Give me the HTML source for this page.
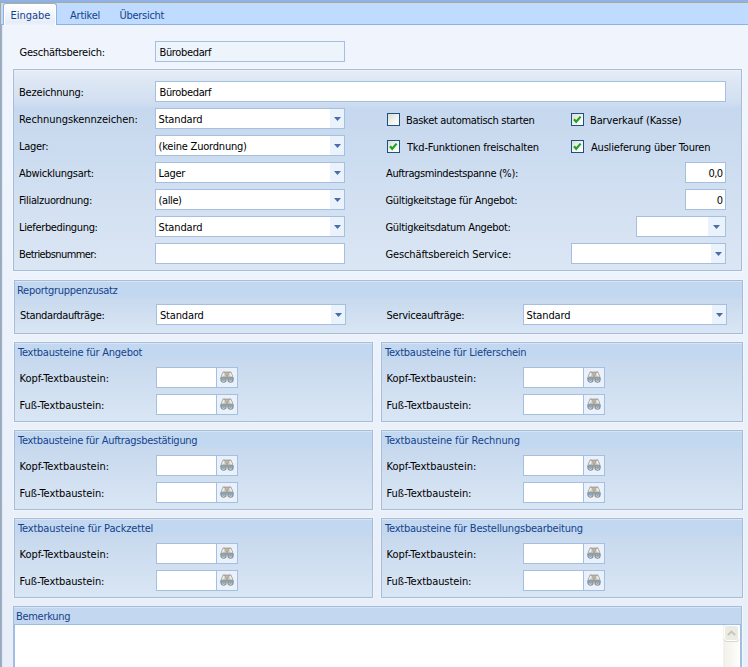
<!DOCTYPE html>
<html lang="de">
<head>
<meta charset="utf-8">
<title>Geschäftsbereich</title>
<style>
html,body{margin:0;padding:0}
body{width:748px;height:667px;overflow:hidden;position:relative;background:#eef4fc;font-family:"DejaVu Sans Condensed","Liberation Sans",sans-serif;font-size:11px;color:#000;line-height:13px}
div,span{box-sizing:border-box}
#page{position:absolute;left:0;top:0;width:748px;height:667px;overflow:hidden;background:linear-gradient(#f0f5fd 0,#f0f5fd 60px,#e8eff9 600px)}
#topa{position:absolute;left:0;top:0;width:748px;height:2px;background:#8db2e3}
#topb{position:absolute;left:0;top:2px;width:748px;height:1px;background:#aca899}
#lefta{position:absolute;left:0;top:2px;width:1px;height:665px;background:#aca899}
#leftb{position:absolute;left:1px;top:25px;width:2px;height:642px;background:linear-gradient(90deg,#8fb2e6 50%,#dde8f8 50%)}
#strip{position:absolute;left:1px;top:3px;width:747px;height:21px;background:#bfdbff}
#stripb{position:absolute;left:1px;top:24px;width:747px;height:1px;background:#8db2e3}
.tab{position:absolute;color:#15428b;white-space:nowrap;height:13px}
#tab1{position:absolute;left:3px;top:3px;width:54px;height:22px;border:1px solid #8db2e3;border-bottom:none;border-radius:3px 3px 0 0;background:linear-gradient(#fff 0,#f5f8fd 35%,#e7edf8 88%,#edf3fb 100%);box-shadow:inset 1px 1px 0 #fff,inset -1px 0 0 #fff}
.l,.lb{position:absolute;white-space:nowrap;height:13px}
.lb{color:#15428b}
.tf,.cb{position:absolute;height:21px;border:1px solid #a5bfe1;background:#fff;white-space:nowrap;overflow:hidden}
.tf .t,.cb .t{position:absolute;left:4px;top:4px;height:13px}
.cb .bt{position:absolute;right:0;top:0;width:14px;height:19px;background:#eaf2fc}
.cb .bt svg{position:absolute;left:4px;top:8px}
.cb .dt{width:17px}
.cb .dt svg{left:5px}
.ro{background:#eef4fc}
.bb{position:absolute;width:22px;height:21px;border:1px solid #a5bfe1;background:#e9f1fc}
.bb svg{position:absolute;left:3px;top:3px}
.ck{position:absolute;width:13px;height:13px;border:1px solid #1c5180;background:linear-gradient(135deg,#dcdcd5,#f3f3ef 55%,#fff)}
.ck svg{position:absolute;left:0;top:0}
.g{position:absolute;border:1px solid #a7bcd8;background:linear-gradient(#c2d8f0 0,#c2d8f0 16px,#c8d9ee 17px,#d9e6f4 100%);box-shadow:inset 0 1px 0 rgba(255,255,255,.35),0 0 0 1px rgba(255,255,255,.3)}
#g1{position:absolute;left:13px;top:69px;width:729px;height:202px;border:1px solid #a7bcd8;background:linear-gradient(#e6edf7 0,#dde7f4 11px,#d2dff1 32px,#c7d8ef 38px,#c6d8ee 40px,#dbe6f4 200px);box-shadow:inset 0 1px 0 rgba(255,255,255,.35),0 0 0 1px rgba(255,255,255,.3)}
#bem{position:absolute;left:13px;top:606px;width:729px;height:70px;border:1px solid #a6bedb;background:#c3d8f0;box-shadow:inset 0 1px 0 #d5e4f5,1px 0 0 #f4f8fd}
#memo{position:absolute;left:0;top:17px;width:727px;height:60px;border:1px solid #9ebde5;background:#fff}
#sb{position:absolute;right:0;top:0;width:17px;height:60px;background:linear-gradient(90deg,#f1f0e9,#fefefb)}
#sbu{position:absolute;left:1px;top:0;width:15px;height:16px;border:1px solid #fff;border-radius:3px;background:#ecebe3;box-shadow:0 1px 0 #d9d8ca}
#sbu svg{position:absolute;left:2px;top:4px}
</style>
</head>
<body>
<div id="page">
<div id="topa"></div><div id="topb"></div>
<div id="strip"></div><div id="stripb"></div>
<div id="lefta"></div><div id="leftb"></div>
<div id="tab1"></div>

<div id="t1" class="tab" style="left:10.5px;top:9px;letter-spacing:-0.045px">Eingabe</div>
<div id="t2" class="tab" style="left:70px;top:9px;letter-spacing:-0.226px">Artikel</div>
<div id="t3" class="tab" style="left:119.5px;top:9px;letter-spacing:-0.278px">Übersicht</div>
<div id="t4" class="l" style="left:19.5px;top:46px;letter-spacing:-0.224px">Geschäftsbereich:</div>
<div class="tf ro" style="left:155px;top:41px;width:190px"><span id="t5" class="t" style="letter-spacing:-0.35px;margin-left:-0.5px">Bürobedarf</span></div>
<div id="g1"></div>
<div id="t6" class="l" style="left:19px;top:86px;letter-spacing:-0.192px">Bezeichnung:</div>
<div class="tf" style="left:155px;top:81px;width:571px"><span id="t7" class="t" style="letter-spacing:-0.349px;margin-left:-0.5px">Bürobedarf</span></div>
<div id="t8" class="l" style="left:19px;top:113px;letter-spacing:-0.047px">Rechnungskennzeichen:</div>
<div class="cb" style="left:155px;top:108px;width:190px"><span id="t9" class="t" style="letter-spacing:-0.155px;margin-left:-1.5px">Standard</span><span class="bt"><svg width="7" height="4" viewBox="0 0 7 4"><path d="M0 0h7L3.5 4z" fill="#4a6da8"/></svg></span></div>
<div id="t10" class="l" style="left:19px;top:140px;letter-spacing:-0.312px">Lager:</div>
<div class="cb" style="left:155px;top:135px;width:190px"><span id="t11" class="t" style="letter-spacing:-0.207px;margin-left:-1.5px">(keine Zuordnung)</span><span class="bt"><svg width="7" height="4" viewBox="0 0 7 4"><path d="M0 0h7L3.5 4z" fill="#4a6da8"/></svg></span></div>
<div id="t12" class="l" style="left:19px;top:167px;letter-spacing:-0.286px">Abwicklungsart:</div>
<div class="cb" style="left:155px;top:162px;width:190px"><span id="t13" class="t" style="letter-spacing:-0.302px;margin-left:-1.5px">Lager</span><span class="bt"><svg width="7" height="4" viewBox="0 0 7 4"><path d="M0 0h7L3.5 4z" fill="#4a6da8"/></svg></span></div>
<div id="t14" class="l" style="left:19px;top:194px;letter-spacing:-0.317px">Filialzuordnung:</div>
<div class="cb" style="left:155px;top:189px;width:190px"><span id="t15" class="t" style="letter-spacing:-0.383px;margin-left:-1.5px">(alle)</span><span class="bt"><svg width="7" height="4" viewBox="0 0 7 4"><path d="M0 0h7L3.5 4z" fill="#4a6da8"/></svg></span></div>
<div id="t16" class="l" style="left:19px;top:221px;letter-spacing:-0.348px">Lieferbedingung:</div>
<div class="cb" style="left:155px;top:216px;width:190px"><span id="t17" class="t" style="letter-spacing:-0.155px;margin-left:-1.5px">Standard</span><span class="bt"><svg width="7" height="4" viewBox="0 0 7 4"><path d="M0 0h7L3.5 4z" fill="#4a6da8"/></svg></span></div>
<div id="t18" class="l" style="left:19px;top:248px;letter-spacing:-0.594px">Betriebsnummer:</div>
<div class="tf" style="left:155px;top:243px;width:190px"></div>
<div class="ck" style="left:387px;top:113px"></div>
<div id="t19" class="l" style="left:406px;top:114px;letter-spacing:-0.304px">Basket automatisch starten</div>
<div class="ck" style="left:571px;top:113px"><svg width="11" height="11" viewBox="0 0 11 11"><path d="M2 5.2l2.2 2.6L8.6 2.6" fill="none" stroke="#21a121" stroke-width="2.1"/></svg></div>
<div id="t20" class="l" style="left:590px;top:114px;letter-spacing:-0.138px">Barverkauf (Kasse)</div>
<div class="ck" style="left:387px;top:140px"><svg width="11" height="11" viewBox="0 0 11 11"><path d="M2 5.2l2.2 2.6L8.6 2.6" fill="none" stroke="#21a121" stroke-width="2.1"/></svg></div>
<div id="t21" class="l" style="left:407px;top:141px;letter-spacing:-0.211px">Tkd-Funktionen freischalten</div>
<div class="ck" style="left:571px;top:140px"><svg width="11" height="11" viewBox="0 0 11 11"><path d="M2 5.2l2.2 2.6L8.6 2.6" fill="none" stroke="#21a121" stroke-width="2.1"/></svg></div>
<div id="t22" class="l" style="left:591px;top:141px;letter-spacing:-0.192px">Auslieferung über Touren</div>
<div id="t23" class="l" style="left:386px;top:167px;letter-spacing:-0.375px">Auftragsmindestspanne (%):</div>
<div class="tf" style="left:685px;top:162px;width:41px"><span id="t24" class="t" style=";left:auto;right:2.6px;letter-spacing:-.6px">0,0</span></div>
<div id="t25" class="l" style="left:385.5px;top:194px;letter-spacing:-0.299px">Gültigkeitstage für Angebot:</div>
<div class="tf" style="left:685px;top:189px;width:41px"><span id="t26" class="t" style=";left:auto;right:2px">0</span></div>
<div id="t27" class="l" style="left:385.5px;top:221px;letter-spacing:-0.319px">Gültigkeitsdatum Angebot:</div>
<div class="cb" style="left:636px;top:216px;width:90px"><span class="bt dt"><svg width="7" height="4" viewBox="0 0 7 4"><path d="M0 0h7L3.5 4z" fill="#4a6da8"/></svg></span></div>
<div id="t28" class="l" style="left:385.5px;top:248px;letter-spacing:-0.128px">Geschäftsbereich Service:</div>
<div class="cb" style="left:571px;top:243px;width:155px"><span class="bt"><svg width="7" height="4" viewBox="0 0 7 4"><path d="M0 0h7L3.5 4z" fill="#4a6da8"/></svg></span></div>
<div class="g" style="left:14px;top:280px;width:729px;height:54px"></div>
<div id="t29" class="lb" style="left:17px;top:284px;letter-spacing:-0.292px">Reportgruppenzusatz</div>
<div id="t30" class="l" style="left:20px;top:309px;letter-spacing:-0.351px">Standardaufträge:</div>
<div class="cb" style="left:156px;top:304px;width:190px"><span id="t31" class="t" style="letter-spacing:-0.16px;margin-left:-1px">Standard</span><span class="bt"><svg width="7" height="4" viewBox="0 0 7 4"><path d="M0 0h7L3.5 4z" fill="#4a6da8"/></svg></span></div>
<div id="t32" class="l" style="left:386.5px;top:309px;letter-spacing:-0.25px">Serviceaufträge:</div>
<div class="cb" style="left:523px;top:304px;width:204px"><span id="t33" class="t" style="letter-spacing:-0.155px;margin-left:-1.5px">Standard</span><span class="bt"><svg width="7" height="4" viewBox="0 0 7 4"><path d="M0 0h7L3.5 4z" fill="#4a6da8"/></svg></span></div>
<div class="g" style="left:14px;top:342px;width:359px;height:80px"></div>
<div class="g" style="left:381px;top:342px;width:362px;height:80px"></div>
<div id="t34" class="lb" style="left:18px;top:346px;letter-spacing:-0.252px">Textbausteine für Angebot</div>
<div id="t35" class="lb" style="left:385px;top:346px;letter-spacing:-0.249px">Textbausteine für Lieferschein</div>
<div id="t36" class="l" style="left:19.5px;top:372px;letter-spacing:-0.008px">Kopf-Textbaustein:</div>
<div id="t37" class="l" style="left:19.5px;top:399px;letter-spacing:-0.084px">Fuß-Textbaustein:</div>
<div id="t38" class="l" style="left:386.5px;top:372px;letter-spacing:0.013px">Kopf-Textbaustein:</div>
<div id="t39" class="l" style="left:386.5px;top:399px;letter-spacing:-0.083px">Fuß-Textbaustein:</div>
<div class="tf" style="left:156px;top:367px;width:61px"></div><div class="bb" style="left:216px;top:367px"><svg width="14" height="12" viewBox="0 0 14 12"><path d="M5.4 1.6h3.2v5H5.4z" fill="#c9c6bf"/><path d="M6.2 .6h1.6v1.4H6.2z" fill="#a39f96"/><path d="M2.9 1.3h2.7l1 6.2H.6z" fill="#d6d3cc" stroke="#8f8b82" stroke-width=".8"/><path d="M8.4 1.3h2.7l2.3 6.2H7.4z" fill="#d6d3cc" stroke="#8f8b82" stroke-width=".8"/><path d="M3.1 1.5h1.2L3.6 6.5H1.4z" fill="#eeece8"/><path d="M9.7 1.5h1.2l1.7 5h-2.2z" fill="#eeece8"/><path d="M3 .9h2.4M8.6 .9H11" stroke="#a8794f" stroke-width=".7" opacity=".7"/><circle cx="3.5" cy="8.6" r="2.6" fill="#7faace" stroke="#98948b" stroke-width="1.2"/><circle cx="10.5" cy="8.6" r="2.6" fill="#7faace" stroke="#98948b" stroke-width="1.2"/><path d="M2.2 9.6a1.6 1.6 0 0 0 2.6 0M9.2 9.6a1.6 1.6 0 0 0 2.6 0" fill="none" stroke="#d3e4f1" stroke-width=".9"/></svg></div>
<div class="tf" style="left:156px;top:394px;width:61px"></div><div class="bb" style="left:216px;top:394px"><svg width="14" height="12" viewBox="0 0 14 12"><path d="M5.4 1.6h3.2v5H5.4z" fill="#c9c6bf"/><path d="M6.2 .6h1.6v1.4H6.2z" fill="#a39f96"/><path d="M2.9 1.3h2.7l1 6.2H.6z" fill="#d6d3cc" stroke="#8f8b82" stroke-width=".8"/><path d="M8.4 1.3h2.7l2.3 6.2H7.4z" fill="#d6d3cc" stroke="#8f8b82" stroke-width=".8"/><path d="M3.1 1.5h1.2L3.6 6.5H1.4z" fill="#eeece8"/><path d="M9.7 1.5h1.2l1.7 5h-2.2z" fill="#eeece8"/><path d="M3 .9h2.4M8.6 .9H11" stroke="#a8794f" stroke-width=".7" opacity=".7"/><circle cx="3.5" cy="8.6" r="2.6" fill="#7faace" stroke="#98948b" stroke-width="1.2"/><circle cx="10.5" cy="8.6" r="2.6" fill="#7faace" stroke="#98948b" stroke-width="1.2"/><path d="M2.2 9.6a1.6 1.6 0 0 0 2.6 0M9.2 9.6a1.6 1.6 0 0 0 2.6 0" fill="none" stroke="#d3e4f1" stroke-width=".9"/></svg></div>
<div class="tf" style="left:523px;top:367px;width:61px"></div><div class="bb" style="left:583px;top:367px"><svg width="14" height="12" viewBox="0 0 14 12"><path d="M5.4 1.6h3.2v5H5.4z" fill="#c9c6bf"/><path d="M6.2 .6h1.6v1.4H6.2z" fill="#a39f96"/><path d="M2.9 1.3h2.7l1 6.2H.6z" fill="#d6d3cc" stroke="#8f8b82" stroke-width=".8"/><path d="M8.4 1.3h2.7l2.3 6.2H7.4z" fill="#d6d3cc" stroke="#8f8b82" stroke-width=".8"/><path d="M3.1 1.5h1.2L3.6 6.5H1.4z" fill="#eeece8"/><path d="M9.7 1.5h1.2l1.7 5h-2.2z" fill="#eeece8"/><path d="M3 .9h2.4M8.6 .9H11" stroke="#a8794f" stroke-width=".7" opacity=".7"/><circle cx="3.5" cy="8.6" r="2.6" fill="#7faace" stroke="#98948b" stroke-width="1.2"/><circle cx="10.5" cy="8.6" r="2.6" fill="#7faace" stroke="#98948b" stroke-width="1.2"/><path d="M2.2 9.6a1.6 1.6 0 0 0 2.6 0M9.2 9.6a1.6 1.6 0 0 0 2.6 0" fill="none" stroke="#d3e4f1" stroke-width=".9"/></svg></div>
<div class="tf" style="left:523px;top:394px;width:61px"></div><div class="bb" style="left:583px;top:394px"><svg width="14" height="12" viewBox="0 0 14 12"><path d="M5.4 1.6h3.2v5H5.4z" fill="#c9c6bf"/><path d="M6.2 .6h1.6v1.4H6.2z" fill="#a39f96"/><path d="M2.9 1.3h2.7l1 6.2H.6z" fill="#d6d3cc" stroke="#8f8b82" stroke-width=".8"/><path d="M8.4 1.3h2.7l2.3 6.2H7.4z" fill="#d6d3cc" stroke="#8f8b82" stroke-width=".8"/><path d="M3.1 1.5h1.2L3.6 6.5H1.4z" fill="#eeece8"/><path d="M9.7 1.5h1.2l1.7 5h-2.2z" fill="#eeece8"/><path d="M3 .9h2.4M8.6 .9H11" stroke="#a8794f" stroke-width=".7" opacity=".7"/><circle cx="3.5" cy="8.6" r="2.6" fill="#7faace" stroke="#98948b" stroke-width="1.2"/><circle cx="10.5" cy="8.6" r="2.6" fill="#7faace" stroke="#98948b" stroke-width="1.2"/><path d="M2.2 9.6a1.6 1.6 0 0 0 2.6 0M9.2 9.6a1.6 1.6 0 0 0 2.6 0" fill="none" stroke="#d3e4f1" stroke-width=".9"/></svg></div>
<div class="g" style="left:14px;top:430px;width:359px;height:80px"></div>
<div class="g" style="left:381px;top:430px;width:362px;height:80px"></div>
<div id="t40" class="lb" style="left:18px;top:434px;letter-spacing:-0.281px">Textbausteine für Auftragsbestätigung</div>
<div id="t41" class="lb" style="left:385px;top:434px;letter-spacing:-0.124px">Textbausteine für Rechnung</div>
<div id="t42" class="l" style="left:19.5px;top:460px;letter-spacing:-0.008px">Kopf-Textbaustein:</div>
<div id="t43" class="l" style="left:19.5px;top:487px;letter-spacing:-0.084px">Fuß-Textbaustein:</div>
<div id="t44" class="l" style="left:386.5px;top:460px;letter-spacing:0.013px">Kopf-Textbaustein:</div>
<div id="t45" class="l" style="left:386.5px;top:487px;letter-spacing:-0.083px">Fuß-Textbaustein:</div>
<div class="tf" style="left:156px;top:455px;width:61px"></div><div class="bb" style="left:216px;top:455px"><svg width="14" height="12" viewBox="0 0 14 12"><path d="M5.4 1.6h3.2v5H5.4z" fill="#c9c6bf"/><path d="M6.2 .6h1.6v1.4H6.2z" fill="#a39f96"/><path d="M2.9 1.3h2.7l1 6.2H.6z" fill="#d6d3cc" stroke="#8f8b82" stroke-width=".8"/><path d="M8.4 1.3h2.7l2.3 6.2H7.4z" fill="#d6d3cc" stroke="#8f8b82" stroke-width=".8"/><path d="M3.1 1.5h1.2L3.6 6.5H1.4z" fill="#eeece8"/><path d="M9.7 1.5h1.2l1.7 5h-2.2z" fill="#eeece8"/><path d="M3 .9h2.4M8.6 .9H11" stroke="#a8794f" stroke-width=".7" opacity=".7"/><circle cx="3.5" cy="8.6" r="2.6" fill="#7faace" stroke="#98948b" stroke-width="1.2"/><circle cx="10.5" cy="8.6" r="2.6" fill="#7faace" stroke="#98948b" stroke-width="1.2"/><path d="M2.2 9.6a1.6 1.6 0 0 0 2.6 0M9.2 9.6a1.6 1.6 0 0 0 2.6 0" fill="none" stroke="#d3e4f1" stroke-width=".9"/></svg></div>
<div class="tf" style="left:156px;top:482px;width:61px"></div><div class="bb" style="left:216px;top:482px"><svg width="14" height="12" viewBox="0 0 14 12"><path d="M5.4 1.6h3.2v5H5.4z" fill="#c9c6bf"/><path d="M6.2 .6h1.6v1.4H6.2z" fill="#a39f96"/><path d="M2.9 1.3h2.7l1 6.2H.6z" fill="#d6d3cc" stroke="#8f8b82" stroke-width=".8"/><path d="M8.4 1.3h2.7l2.3 6.2H7.4z" fill="#d6d3cc" stroke="#8f8b82" stroke-width=".8"/><path d="M3.1 1.5h1.2L3.6 6.5H1.4z" fill="#eeece8"/><path d="M9.7 1.5h1.2l1.7 5h-2.2z" fill="#eeece8"/><path d="M3 .9h2.4M8.6 .9H11" stroke="#a8794f" stroke-width=".7" opacity=".7"/><circle cx="3.5" cy="8.6" r="2.6" fill="#7faace" stroke="#98948b" stroke-width="1.2"/><circle cx="10.5" cy="8.6" r="2.6" fill="#7faace" stroke="#98948b" stroke-width="1.2"/><path d="M2.2 9.6a1.6 1.6 0 0 0 2.6 0M9.2 9.6a1.6 1.6 0 0 0 2.6 0" fill="none" stroke="#d3e4f1" stroke-width=".9"/></svg></div>
<div class="tf" style="left:523px;top:455px;width:61px"></div><div class="bb" style="left:583px;top:455px"><svg width="14" height="12" viewBox="0 0 14 12"><path d="M5.4 1.6h3.2v5H5.4z" fill="#c9c6bf"/><path d="M6.2 .6h1.6v1.4H6.2z" fill="#a39f96"/><path d="M2.9 1.3h2.7l1 6.2H.6z" fill="#d6d3cc" stroke="#8f8b82" stroke-width=".8"/><path d="M8.4 1.3h2.7l2.3 6.2H7.4z" fill="#d6d3cc" stroke="#8f8b82" stroke-width=".8"/><path d="M3.1 1.5h1.2L3.6 6.5H1.4z" fill="#eeece8"/><path d="M9.7 1.5h1.2l1.7 5h-2.2z" fill="#eeece8"/><path d="M3 .9h2.4M8.6 .9H11" stroke="#a8794f" stroke-width=".7" opacity=".7"/><circle cx="3.5" cy="8.6" r="2.6" fill="#7faace" stroke="#98948b" stroke-width="1.2"/><circle cx="10.5" cy="8.6" r="2.6" fill="#7faace" stroke="#98948b" stroke-width="1.2"/><path d="M2.2 9.6a1.6 1.6 0 0 0 2.6 0M9.2 9.6a1.6 1.6 0 0 0 2.6 0" fill="none" stroke="#d3e4f1" stroke-width=".9"/></svg></div>
<div class="tf" style="left:523px;top:482px;width:61px"></div><div class="bb" style="left:583px;top:482px"><svg width="14" height="12" viewBox="0 0 14 12"><path d="M5.4 1.6h3.2v5H5.4z" fill="#c9c6bf"/><path d="M6.2 .6h1.6v1.4H6.2z" fill="#a39f96"/><path d="M2.9 1.3h2.7l1 6.2H.6z" fill="#d6d3cc" stroke="#8f8b82" stroke-width=".8"/><path d="M8.4 1.3h2.7l2.3 6.2H7.4z" fill="#d6d3cc" stroke="#8f8b82" stroke-width=".8"/><path d="M3.1 1.5h1.2L3.6 6.5H1.4z" fill="#eeece8"/><path d="M9.7 1.5h1.2l1.7 5h-2.2z" fill="#eeece8"/><path d="M3 .9h2.4M8.6 .9H11" stroke="#a8794f" stroke-width=".7" opacity=".7"/><circle cx="3.5" cy="8.6" r="2.6" fill="#7faace" stroke="#98948b" stroke-width="1.2"/><circle cx="10.5" cy="8.6" r="2.6" fill="#7faace" stroke="#98948b" stroke-width="1.2"/><path d="M2.2 9.6a1.6 1.6 0 0 0 2.6 0M9.2 9.6a1.6 1.6 0 0 0 2.6 0" fill="none" stroke="#d3e4f1" stroke-width=".9"/></svg></div>
<div class="g" style="left:14px;top:518px;width:359px;height:80px"></div>
<div class="g" style="left:381px;top:518px;width:362px;height:80px"></div>
<div id="t46" class="lb" style="left:18px;top:522px;letter-spacing:-0.148px">Textbausteine für Packzettel</div>
<div id="t47" class="lb" style="left:385px;top:522px;letter-spacing:-0.219px">Textbausteine für Bestellungsbearbeitung</div>
<div id="t48" class="l" style="left:19.5px;top:548px;letter-spacing:-0.008px">Kopf-Textbaustein:</div>
<div id="t49" class="l" style="left:19.5px;top:575px;letter-spacing:-0.084px">Fuß-Textbaustein:</div>
<div id="t50" class="l" style="left:386.5px;top:548px;letter-spacing:0.013px">Kopf-Textbaustein:</div>
<div id="t51" class="l" style="left:386.5px;top:575px;letter-spacing:-0.084px">Fuß-Textbaustein:</div>
<div class="tf" style="left:156px;top:543px;width:61px"></div><div class="bb" style="left:216px;top:543px"><svg width="14" height="12" viewBox="0 0 14 12"><path d="M5.4 1.6h3.2v5H5.4z" fill="#c9c6bf"/><path d="M6.2 .6h1.6v1.4H6.2z" fill="#a39f96"/><path d="M2.9 1.3h2.7l1 6.2H.6z" fill="#d6d3cc" stroke="#8f8b82" stroke-width=".8"/><path d="M8.4 1.3h2.7l2.3 6.2H7.4z" fill="#d6d3cc" stroke="#8f8b82" stroke-width=".8"/><path d="M3.1 1.5h1.2L3.6 6.5H1.4z" fill="#eeece8"/><path d="M9.7 1.5h1.2l1.7 5h-2.2z" fill="#eeece8"/><path d="M3 .9h2.4M8.6 .9H11" stroke="#a8794f" stroke-width=".7" opacity=".7"/><circle cx="3.5" cy="8.6" r="2.6" fill="#7faace" stroke="#98948b" stroke-width="1.2"/><circle cx="10.5" cy="8.6" r="2.6" fill="#7faace" stroke="#98948b" stroke-width="1.2"/><path d="M2.2 9.6a1.6 1.6 0 0 0 2.6 0M9.2 9.6a1.6 1.6 0 0 0 2.6 0" fill="none" stroke="#d3e4f1" stroke-width=".9"/></svg></div>
<div class="tf" style="left:156px;top:570px;width:61px"></div><div class="bb" style="left:216px;top:570px"><svg width="14" height="12" viewBox="0 0 14 12"><path d="M5.4 1.6h3.2v5H5.4z" fill="#c9c6bf"/><path d="M6.2 .6h1.6v1.4H6.2z" fill="#a39f96"/><path d="M2.9 1.3h2.7l1 6.2H.6z" fill="#d6d3cc" stroke="#8f8b82" stroke-width=".8"/><path d="M8.4 1.3h2.7l2.3 6.2H7.4z" fill="#d6d3cc" stroke="#8f8b82" stroke-width=".8"/><path d="M3.1 1.5h1.2L3.6 6.5H1.4z" fill="#eeece8"/><path d="M9.7 1.5h1.2l1.7 5h-2.2z" fill="#eeece8"/><path d="M3 .9h2.4M8.6 .9H11" stroke="#a8794f" stroke-width=".7" opacity=".7"/><circle cx="3.5" cy="8.6" r="2.6" fill="#7faace" stroke="#98948b" stroke-width="1.2"/><circle cx="10.5" cy="8.6" r="2.6" fill="#7faace" stroke="#98948b" stroke-width="1.2"/><path d="M2.2 9.6a1.6 1.6 0 0 0 2.6 0M9.2 9.6a1.6 1.6 0 0 0 2.6 0" fill="none" stroke="#d3e4f1" stroke-width=".9"/></svg></div>
<div class="tf" style="left:523px;top:543px;width:61px"></div><div class="bb" style="left:583px;top:543px"><svg width="14" height="12" viewBox="0 0 14 12"><path d="M5.4 1.6h3.2v5H5.4z" fill="#c9c6bf"/><path d="M6.2 .6h1.6v1.4H6.2z" fill="#a39f96"/><path d="M2.9 1.3h2.7l1 6.2H.6z" fill="#d6d3cc" stroke="#8f8b82" stroke-width=".8"/><path d="M8.4 1.3h2.7l2.3 6.2H7.4z" fill="#d6d3cc" stroke="#8f8b82" stroke-width=".8"/><path d="M3.1 1.5h1.2L3.6 6.5H1.4z" fill="#eeece8"/><path d="M9.7 1.5h1.2l1.7 5h-2.2z" fill="#eeece8"/><path d="M3 .9h2.4M8.6 .9H11" stroke="#a8794f" stroke-width=".7" opacity=".7"/><circle cx="3.5" cy="8.6" r="2.6" fill="#7faace" stroke="#98948b" stroke-width="1.2"/><circle cx="10.5" cy="8.6" r="2.6" fill="#7faace" stroke="#98948b" stroke-width="1.2"/><path d="M2.2 9.6a1.6 1.6 0 0 0 2.6 0M9.2 9.6a1.6 1.6 0 0 0 2.6 0" fill="none" stroke="#d3e4f1" stroke-width=".9"/></svg></div>
<div class="tf" style="left:523px;top:570px;width:61px"></div><div class="bb" style="left:583px;top:570px"><svg width="14" height="12" viewBox="0 0 14 12"><path d="M5.4 1.6h3.2v5H5.4z" fill="#c9c6bf"/><path d="M6.2 .6h1.6v1.4H6.2z" fill="#a39f96"/><path d="M2.9 1.3h2.7l1 6.2H.6z" fill="#d6d3cc" stroke="#8f8b82" stroke-width=".8"/><path d="M8.4 1.3h2.7l2.3 6.2H7.4z" fill="#d6d3cc" stroke="#8f8b82" stroke-width=".8"/><path d="M3.1 1.5h1.2L3.6 6.5H1.4z" fill="#eeece8"/><path d="M9.7 1.5h1.2l1.7 5h-2.2z" fill="#eeece8"/><path d="M3 .9h2.4M8.6 .9H11" stroke="#a8794f" stroke-width=".7" opacity=".7"/><circle cx="3.5" cy="8.6" r="2.6" fill="#7faace" stroke="#98948b" stroke-width="1.2"/><circle cx="10.5" cy="8.6" r="2.6" fill="#7faace" stroke="#98948b" stroke-width="1.2"/><path d="M2.2 9.6a1.6 1.6 0 0 0 2.6 0M9.2 9.6a1.6 1.6 0 0 0 2.6 0" fill="none" stroke="#d3e4f1" stroke-width=".9"/></svg></div>
<div id="bem"><div id="memo"><div id="sb"><div id="sbu"><svg width="9" height="6" viewBox="0 0 9 6"><path d="M.8 5.2L4.5 1.5l3.7 3.7" fill="none" stroke="#c6c5ba" stroke-width="1.9"/></svg></div></div></div></div>
<div id="t52" class="lb" style="left:16px;top:610px;letter-spacing:-0.307px">Bemerkung</div>
</div>
</body>
</html>
